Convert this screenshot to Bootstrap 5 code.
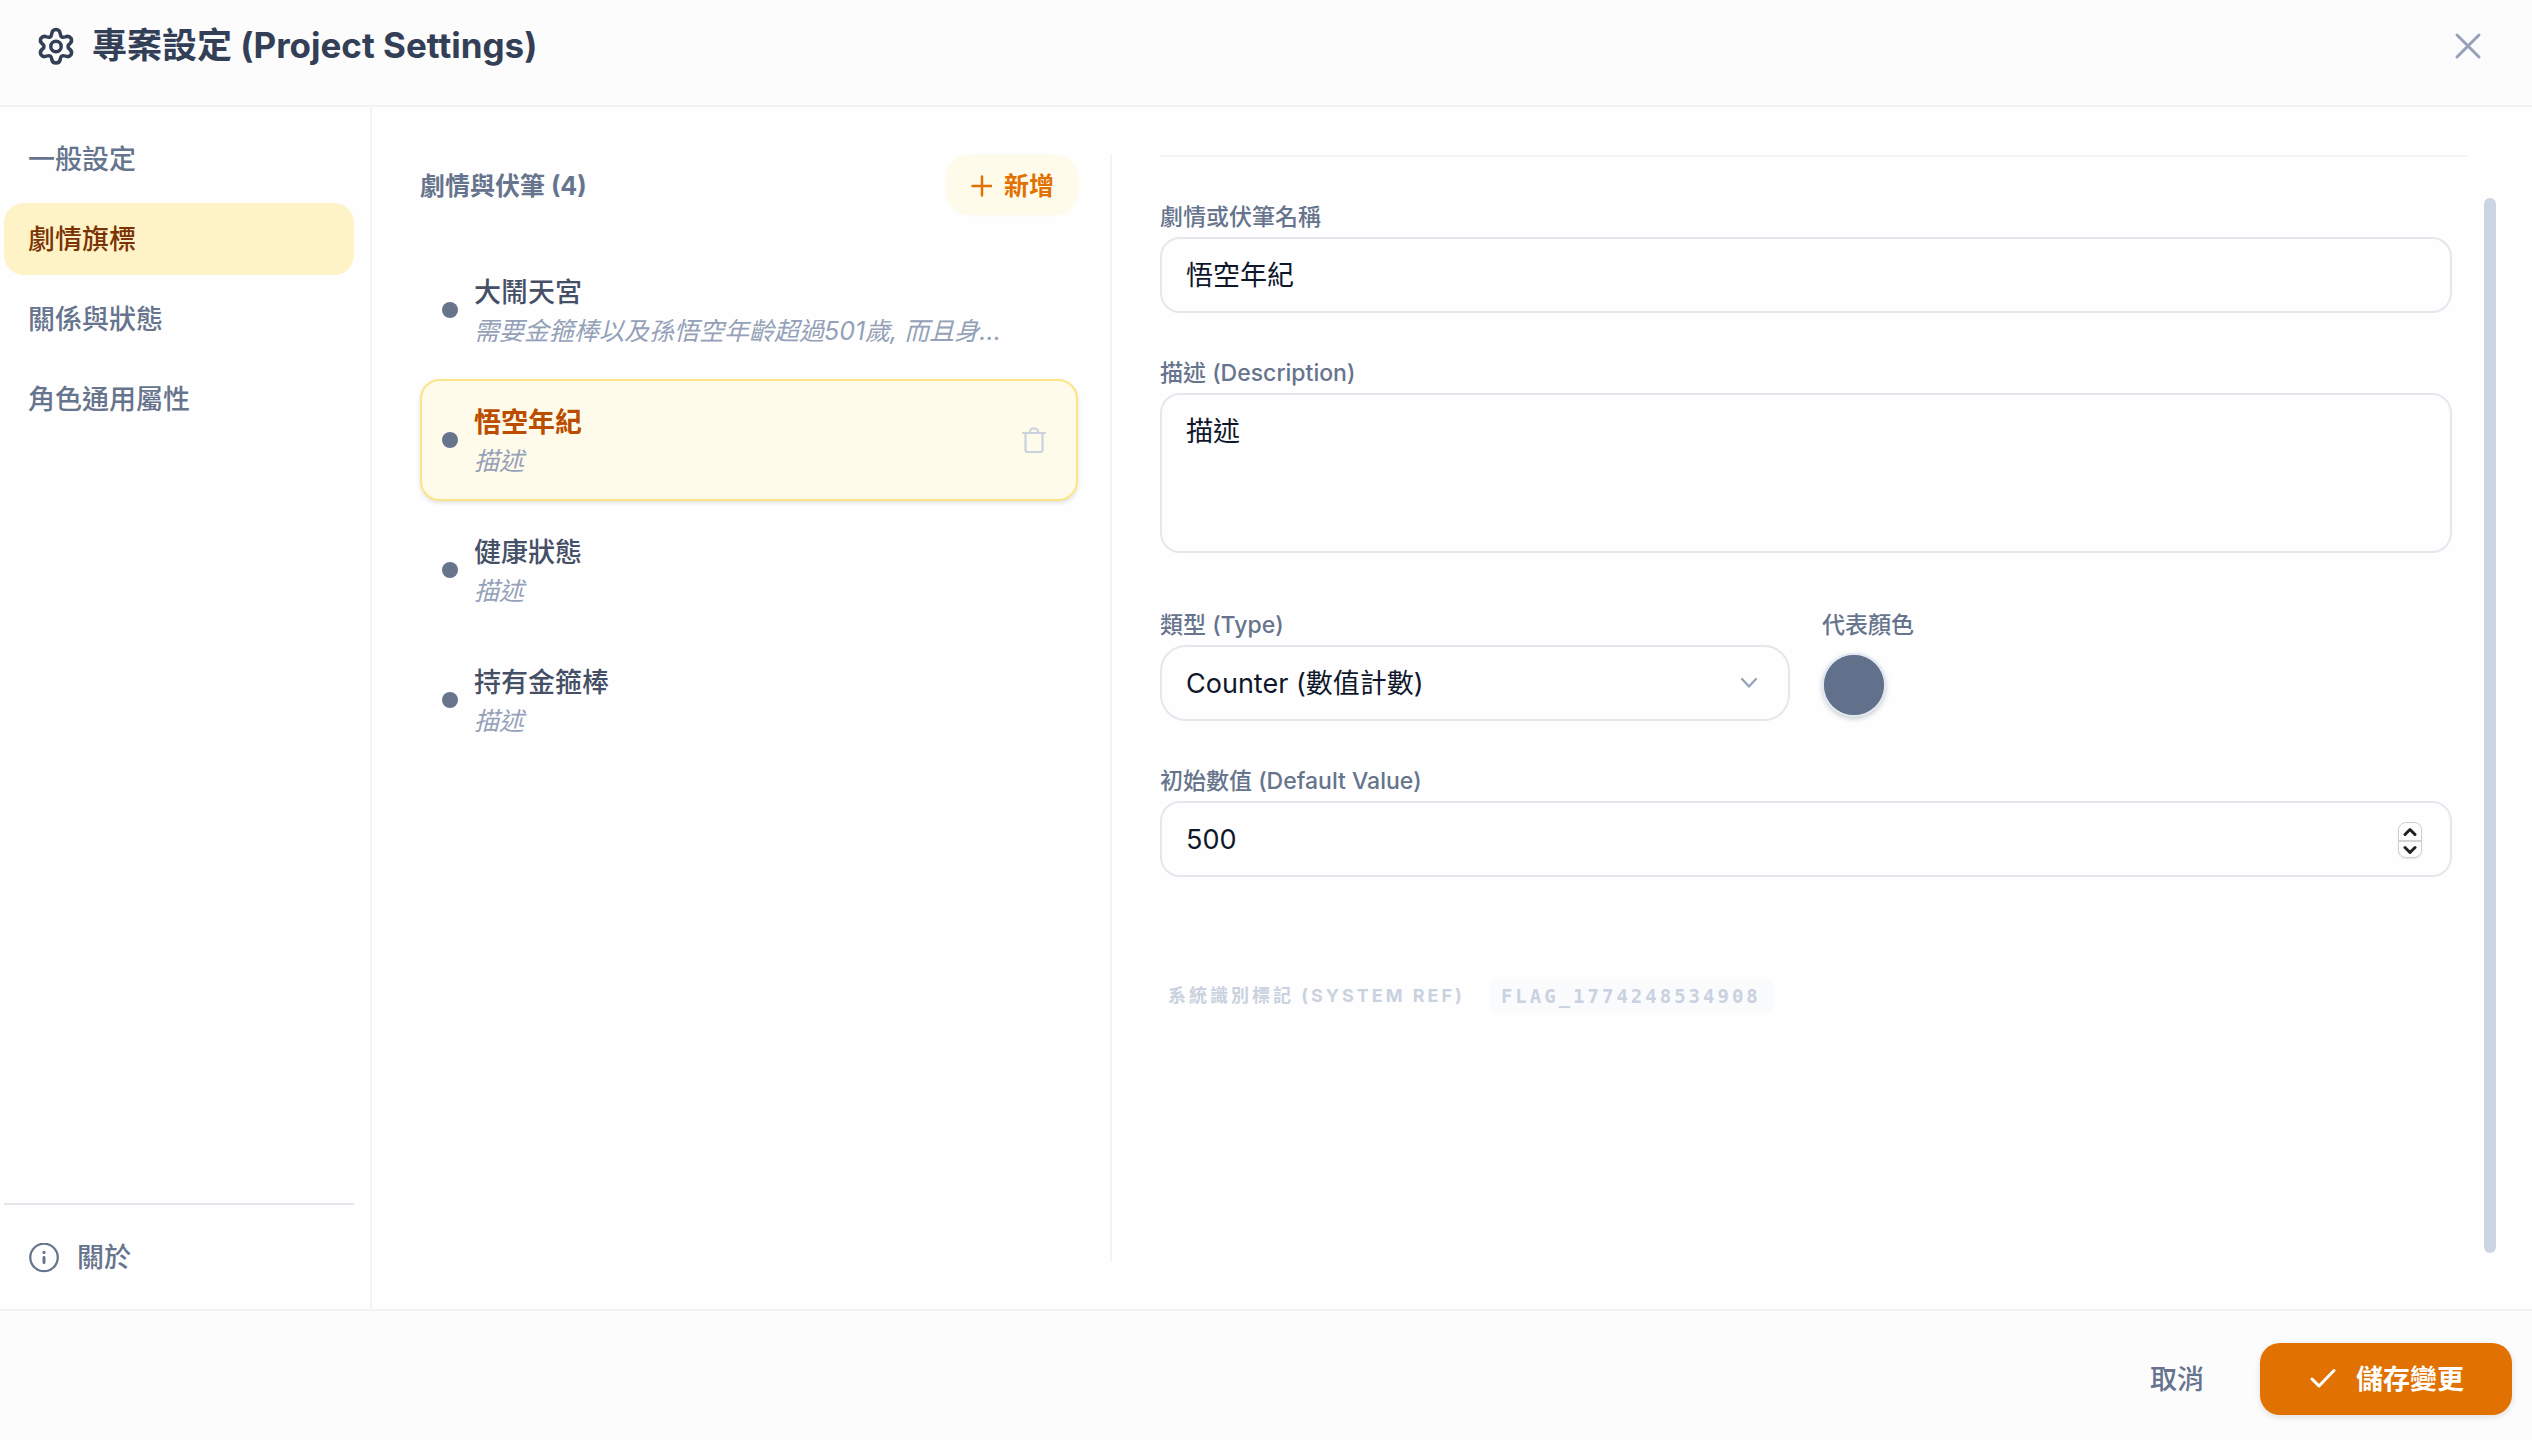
<!DOCTYPE html>
<html lang="zh-Hant">
<head>
<meta charset="utf-8">
<meta name="viewport" content="width=device-width, initial-scale=1">
<title>專案設定 (Project Settings)</title>
<link href="https://cdn.jsdelivr.net/npm/bootstrap@5.3.0/dist/css/bootstrap.min.css" rel="stylesheet">
<style>
  :root {
    --slate-300: #cad2df;
    --slate-400: #94a1b8;
    --slate-500: #66748d;
    --slate-700: #455066;
    --slate-800: #333f56;
    --amber-50: #fffbeb;
    --amber-100: #fef3c6;
    --amber-200: #fbe588;
    --amber-600: #e17100;
    --line: #f1f4f7;
    --line-strong: #e4e8ed;
  }
  body {
    font-family: Inter, "Noto Sans CJK TC", sans-serif;
    font-size: 27px;
    line-height: 40px;
    color: var(--slate-500);
    background: #fefefe;
  }
  svg { display: block; flex: none; fill: none; stroke: currentColor; stroke-linecap: round; stroke-linejoin: round; }
  .top-bar { padding: 20px 48px 34px 36px; background: #fcfcfd; border-bottom: 2px solid var(--line); color: var(--slate-800); }
  .top-bar h1 { font-size: 35px; line-height: 51px; font-weight: 700; }
  .plain-btn { padding: 0; border: 0; background: none; color: inherit; font-weight: 500; }
  .close-btn { color: var(--slate-400); }

  .side-nav { flex: 0 0 372px; padding: 16px 16px 16px 4px; border-right: 2px solid var(--line); }
  .side-nav .nav { gap: 8px; }
  .side-nav .nav-link { padding: 17px 24px 15px; color: var(--slate-500); font-weight: 500; border-radius: 20px; }
  .side-nav .nav-link.active { background: var(--amber-100); color: #7b3306; }
  .side-foot { border-top: 2px solid var(--line-strong); padding-top: 16px; }
  .side-foot .nav-link { gap: 18px; }

  .content-area { padding: 48px 36px 48px 48px; }
  .flag-panel { flex: 0 0 692px; padding-right: 32px; border-right: 2px solid var(--line); }
  .flag-panel h2 { padding-top: 2px; font-size: 25px; line-height: 40px; font-weight: 700; }
  .add-btn { gap: 12px; padding: 11px 24px 9px; border: 0; border-radius: 24px; background: var(--amber-50); color: var(--amber-600); font-size: 25px; line-height: 40px; font-weight: 700; box-shadow: 0 0 4px var(--amber-50); }
  .flag-list { gap: 8px; margin-top: 34px; }
  .flag-card { gap: 16px; padding: 20px 28px 20px 20px; border: 2px solid transparent; border-radius: 20px; }
  .flag-card.selected { background: var(--amber-50); border-color: var(--amber-200); box-shadow: 0 2px 4px rgba(0, 0, 0, .12); }
  .flag-dot { flex: none; width: 16px; height: 16px; border-radius: 50%; background: #68748c; }
  .flag-name { padding-top: 2px; line-height: 40px; font-weight: 500; color: var(--slate-700); }
  .selected .flag-name { font-weight: 700; color: #bb4d00; }
  .flag-note { font-size: 25px; line-height: 36px; font-style: italic; color: var(--slate-400); }
  .trash-btn { color: var(--slate-300); }

  .form-shell { padding-left: 48px; gap: 16px; }
  .form-body { gap: 44px; padding: 44px 16px 0 0; border-top: 2px solid var(--line); }
  .form-label { display: block; margin-bottom: 4px; font-size: 23px; line-height: 32px; font-weight: 500; }
  .form-control, .form-select { padding: 17px 24px 15px; font-size: 27px; line-height: 40px; color: #0f172b; background-color: #fefefe; border: 2px solid var(--line-strong); border-radius: 20px; }
  textarea.form-control { height: 160px; margin-bottom: 12px; resize: none; }
  .form-select { border-radius: 26px; background-image: none; }
  .select-mark { right: 31px; top: 28px; pointer-events: none; color: var(--slate-400); }
  .pair { display: grid; grid-template-columns: 1fr 1fr; gap: 32px; }
  .color-dot { width: 64px; height: 64px; margin-top: 12px; padding: 0; border: 2px solid #e2e8f0; border-radius: 50%; background: #62718b; box-shadow: 0 2px 5px rgba(40, 60, 90, .25); appearance: none; overflow: hidden; display: block; }
  .color-dot::-webkit-color-swatch-wrapper { padding: 0; }
  .color-dot::-webkit-color-swatch { border: 0; border-radius: 50%; }
  .number-box { padding-right: 28px; }
  .number-box input { min-width: 0; border: 0; padding: 0; outline: 0; background: none; color: inherit; line-height: 40px; appearance: textfield; }
  .number-box input::-webkit-inner-spin-button { appearance: none; margin: 0; }
  .stepper { width: 24px; height: 36px; border: 1px solid #cfcfcf; border-radius: 8px; color: #222; box-shadow: 0 1px 2px rgba(0, 0, 0, .1); }
  .stepper button { height: 17px; }
  .stepper button + button { border-top: 2px solid #d4d4d4; }
  .sys-ref { gap: 24px; margin-top: 58px; padding-left: 8px; font-size: 18px; line-height: 34px; font-weight: 700; letter-spacing: 3px; color: var(--slate-300); }
  .sys-ref code { padding: 0 12px; border-radius: 8px; background: #f9fbfd; color: inherit; font-family: "DejaVu Sans Mono", monospace; font-size: 19px; }
  .scroll-track { flex: 0 0 12px; margin: 43px 0 8px; border-radius: 6px; background: #ccd5e2; }

  .bottom-bar { gap: 56px; padding: 32px 20px 25px; background: #fcfcfd; border-top: 2px solid var(--line); }
  .bottom-bar .plain-btn { padding-top: 2px; }
  .save-btn { gap: 20px; padding: 17px 48px 15px; border: 0; border-radius: 20px; background: var(--amber-600); color: #fff; font-size: 27px; line-height: 40px; font-weight: 700; box-shadow: 0 2px 6px rgba(0, 0, 0, .12); }
</style>
</head>
<body>
<div class="min-vh-100 d-flex flex-column">
  <header class="top-bar d-flex align-items-center justify-content-between">
    <div class="d-flex align-items-center gap-3">
      <svg width="40" height="40" viewBox="0 0 40 40" stroke-width="3.5" aria-hidden="true"><path d="M20 3.500C23 3.500 24 5.500 24.300 8C24.600 10.800 26.500 12 29 11C31.500 10 33.500 10 35 12.200C36.400 14.800 35.500 16.500 33.500 18C31.500 19.400 31.500 21.600 33.500 23C35.500 24.500 36.400 26.200 35 28.800C33.500 31 31.500 31 29 30C26.500 29 24.600 30.200 24.300 33C24 35.500 23 37 20 37C17 37 16 35.500 15.700 33C15.400 30.200 13.500 29 11 30C8.500 31 6.500 31 5 28.800C3.600 26.200 4.500 24.500 6.500 23C8.500 21.600 8.500 19.400 6.500 18C4.500 16.500 3.600 14.800 5 12.200C6.500 10 8.500 10 11 11C13.500 12 15.400 10.800 15.700 8C16 5.500 17 3.500 20 3.500Z"/><circle cx="20" cy="20.500" r="5.200"/></svg>
      <h1 class="m-0">專案設定 (Project Settings)</h1>
    </div>
    <button type="button" class="plain-btn close-btn" aria-label="關閉"><svg width="32" height="32" viewBox="0 0 32 32" stroke-width="3"><path d="M5 5l22 22M27 5L5 27"/></svg></button>
  </header>

  <div class="d-flex flex-grow-1">
    <aside class="side-nav d-flex flex-column justify-content-between">
      <nav class="nav nav-pills flex-column">
        <a class="nav-link" href="#">一般設定</a>
        <a class="nav-link active" href="#" aria-current="page">劇情旗標</a>
        <a class="nav-link" href="#">關係與狀態</a>
        <a class="nav-link" href="#">角色通用屬性</a>
      </nav>
      <div class="side-foot">
        <a class="nav-link d-flex align-items-center" href="#"><svg width="31" height="31" viewBox="0 0 30 30" stroke-width="2.200" aria-hidden="true"><circle cx="15.500" cy="14" r="13.300"/><path d="M15.500 14v5" stroke-width="2.800"/><path d="M15.500 9v.1" stroke-width="3"/></svg>關於</a>
      </div>
    </aside>

    <main class="content-area d-flex flex-grow-1">
      <section class="flag-panel">
        <div class="d-flex align-items-center justify-content-between">
          <h2 class="m-0">劇情與伏筆 (4)</h2>
          <button type="button" class="add-btn btn d-flex align-items-center"><svg width="22" height="22" viewBox="0 0 22 22" stroke-width="2.500" aria-hidden="true"><path d="M12 1.500v19M2.500 11h19"/></svg>新增</button>
        </div>
        <div class="flag-list d-flex flex-column">
          <div class="flag-card d-flex align-items-center">
            <span class="flag-dot"></span>
            <div class="flex-grow-1"><div class="flag-name">大鬧天宮</div><div class="flag-note">需要金箍棒以及孫悟空年齡超過501歲, 而且身...</div></div>
          </div>
          <div class="flag-card selected d-flex align-items-center">
            <span class="flag-dot"></span>
            <div class="flex-grow-1"><div class="flag-name">悟空年紀</div><div class="flag-note">描述</div></div>
            <button type="button" class="plain-btn trash-btn" aria-label="刪除"><svg width="28" height="28" viewBox="0 0 28 28" stroke-width="2.200"><path d="M3 7h22M5.500 7v17q0 2 2 2h13q2 0 2-2V7M9.500 7l1-3q.5-1.500 2-1.500h3q1.500 0 2 1.500l1 3"/></svg></button>
          </div>
          <div class="flag-card d-flex align-items-center">
            <span class="flag-dot"></span>
            <div class="flex-grow-1"><div class="flag-name">健康狀態</div><div class="flag-note">描述</div></div>
          </div>
          <div class="flag-card d-flex align-items-center">
            <span class="flag-dot"></span>
            <div class="flex-grow-1"><div class="flag-name">持有金箍棒</div><div class="flag-note">描述</div></div>
          </div>
        </div>
      </section>

      <section class="form-shell d-flex flex-grow-1">
        <form class="form-body d-flex flex-column flex-grow-1">
          <div>
            <label class="form-label" for="flagName">劇情或伏筆名稱</label>
            <input class="form-control" id="flagName" type="text" value="悟空年紀">
          </div>
          <div>
            <label class="form-label" for="flagDesc">描述 (Description)</label>
            <textarea class="form-control" id="flagDesc">描述</textarea>
          </div>
          <div class="pair">
            <div>
              <label class="form-label" for="flagType">類型 (Type)</label>
              <div class="position-relative">
                <select class="form-select" id="flagType"><option>Counter (數值計數)</option></select>
                <svg class="select-mark position-absolute" width="20" height="20" viewBox="0 0 20 20" stroke-width="2.200" aria-hidden="true"><path d="M3 6l7 7.500L17 6"/></svg>
              </div>
            </div>
            <div>
              <label class="form-label" for="flagColor">代表顏色</label>
              <input class="color-dot" id="flagColor" type="color" value="#62718b">
            </div>
          </div>
          <div>
            <label class="form-label" for="flagValue">初始數值 (Default Value)</label>
            <div class="form-control number-box d-flex align-items-center">
              <input class="flex-grow-1" id="flagValue" type="number" value="500">
              <div class="stepper d-flex flex-column">
                <button type="button" class="plain-btn d-flex align-items-center justify-content-center" aria-label="增加"><svg width="14" height="10" viewBox="0 0 14 10" stroke-width="3"><path d="M2 7.500l5-5 5 5"/></svg></button>
                <button type="button" class="plain-btn d-flex align-items-center justify-content-center" aria-label="減少"><svg width="14" height="10" viewBox="0 0 14 10" stroke-width="3"><path d="M2 2.500l5 5 5-5"/></svg></button>
              </div>
            </div>
          </div>
          <div class="sys-ref d-flex align-items-center">
            <span>系統識別標記 (SYSTEM REF)</span>
            <code>FLAG_1774248534908</code>
          </div>
        </form>
        <div class="scroll-track" aria-hidden="true"></div>
      </section>
    </main>
  </div>

  <footer class="bottom-bar d-flex align-items-center justify-content-end">
    <button type="button" class="plain-btn">取消</button>
    <button type="button" class="save-btn btn d-flex align-items-center"><svg width="28" height="28" viewBox="0 0 28 28" stroke-width="3" aria-hidden="true"><path d="M4 13l7 7L26 4.500"/></svg>儲存變更</button>
  </footer>
</div>
<script src="https://cdn.jsdelivr.net/npm/bootstrap@5.3.0/dist/js/bootstrap.bundle.min.js"></script>
</body>
</html>
